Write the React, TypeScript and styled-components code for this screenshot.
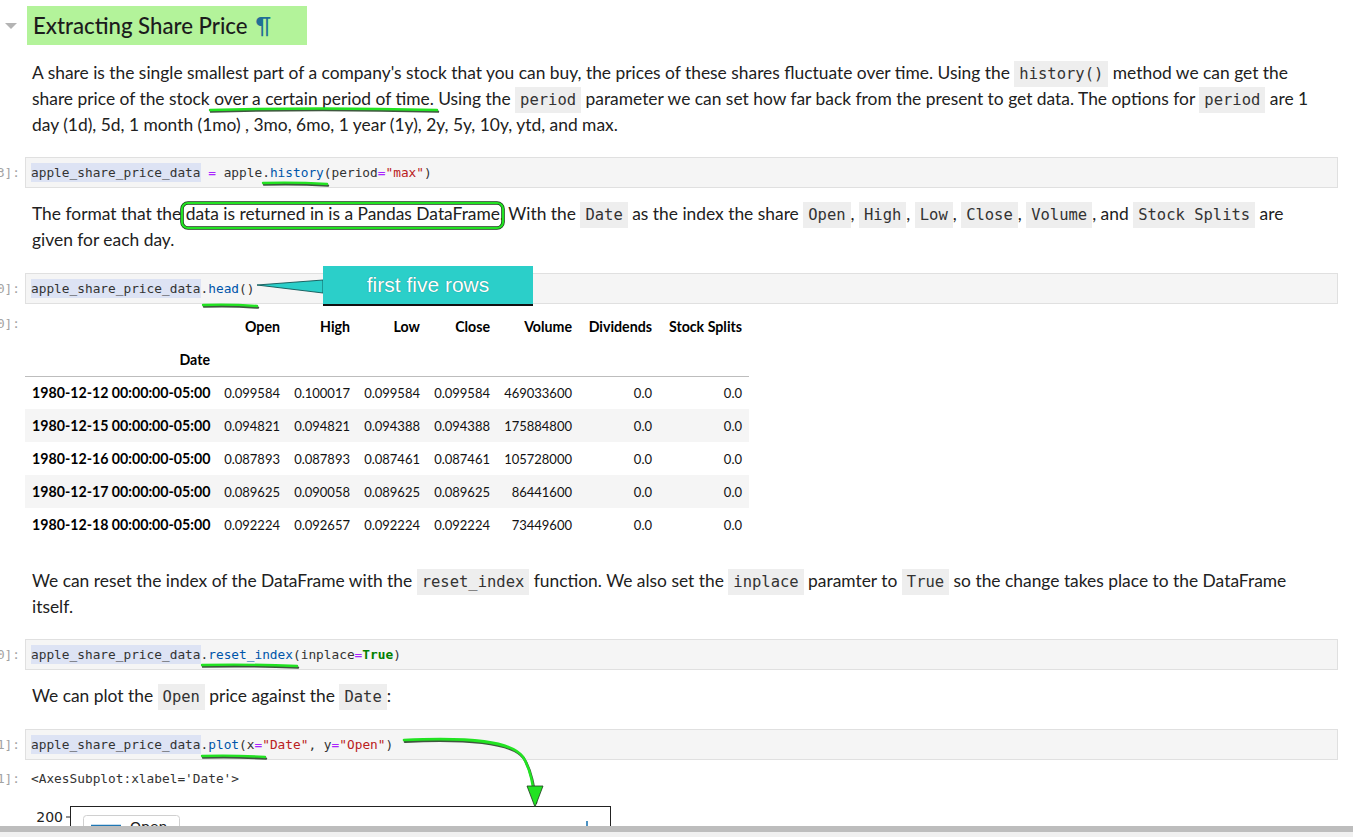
import React from "react";
import styled, { createGlobalStyle } from "styled-components";

const GlobalStyle = createGlobalStyle`
  html, body { margin: 0; padding: 0; background: #ffffff; }
  body { font-family: Lato, "Noto Sans", sans-serif; color: #212121; overflow: hidden; }
`;

const Page = styled.div`
  width: 1353px;
  height: 837px;
  display: flex;
  flex-direction: column;
  overflow: hidden;
  background: #fff;
`;

const Viewport = styled.div`
  position: relative;
  height: 826px;
  flex: none;
  overflow: hidden;
`;

const Notebook = styled.div`
  display: flex;
  flex-direction: column;
  padding-top: 6px;
`;

const Row = styled.div<{ $gap?: number }>`
  display: grid;
  grid-template-columns: 25px 1313px;
  margin-top: ${(p) => p.$gap ?? 0}px;
`;

const Prompt = styled.div<{ $lh?: number }>`
  display: flex;
  justify-content: flex-end;
  align-items: flex-start;
  overflow: hidden;
  white-space: nowrap;
  padding-right: 5px;
  font-family: "DejaVu Sans Mono", monospace;
  font-size: 12.8px;
  line-height: ${(p) => p.$lh ?? 31}px;
  color: #a3a3a3;
`;

const ToggleCell = styled.div`
  display: flex;
  align-items: center;
  padding-left: 5px;
`;

const Caret = styled.div`
  width: 0;
  height: 0;
  border-left: 6px solid transparent;
  border-right: 6px solid transparent;
  border-top: 6px solid #b4b4b4;
`;

const Heading = styled.h2`
  margin: 0 0 0 2px;
  box-sizing: border-box;
  width: 280px;
  height: 39px;
  display: flex;
  align-items: center;
  padding: 0 6px;
  background: #b3f39a;
  font-family: Lato, "Noto Sans", sans-serif;
  font-size: 22.2px;
  font-weight: 500;
  color: #1c1c1c;
`;

const Anchor = styled.span`
  margin-left: 8px;
  color: #1f6f96;
  font-weight: 400;
`;

const Markdown = styled.div`
  padding: 0 22px 0 7px;
  font-size: 17.4px;
  line-height: 26px;
  color: #212121;
  p { margin: 0; }
`;

const InlineCode = styled.code`
  font-family: "DejaVu Sans Mono", monospace;
  font-size: 15.5px;
  line-height: 1;
  background: #eeeeee;
  padding: 4px 5px;
  color: #333;
`;

const CodeCell = styled.div`
  box-sizing: border-box;
  height: 31px;
  border: 1px solid #e0e0e0;
  background: #f5f5f5;
  padding: 0 5px;
  font-family: "DejaVu Sans Mono", monospace;
  font-size: 12.8px;
  line-height: 29px;
  color: #333;
  white-space: pre;
`;

const Var = styled.span`
  background: #dde3f4;
  padding: 2px 0;
`;
const Op = styled.span`color: #aa22ff;`;
const Prop = styled.span`color: #0055aa;`;
const Str = styled.span`color: #ba2121;`;
const Kw = styled.span`color: #008000; font-weight: 700;`;

const Table = styled.table`
  border-collapse: collapse;
  table-layout: fixed;
  width: 724px;
  font-family: Lato, "Noto Sans", sans-serif;
  color: #111;

  th, td {
    height: 33px;
    padding: 0 7px;
    text-align: right;
    vertical-align: middle;
    white-space: nowrap;
    box-sizing: border-box;
  }
  th { font-weight: 700; font-size: 14.2px; color: #000; }
  td { font-weight: 400; font-size: 13px; }
  thead tr:last-child th { border-bottom: 1px solid #bdbdbd; }
  tbody tr:nth-child(even) { background: #f5f5f5; }
`;

const OutputText = styled.div`
  padding-left: 6px;
  font-family: "DejaVu Sans Mono", monospace;
  font-size: 12.8px;
  line-height: 18px;
  color: #333;
`;

const PlotBox = styled.div`
  height: 60px;
`;

const Overlay = styled.svg`
  position: absolute;
  left: 0;
  top: 0;
  width: 1353px;
  height: 826px;
  pointer-events: none;
`;

const Callout = styled.div`
  position: absolute;
  left: 323px;
  top: 266px;
  width: 210px;
  height: 40px;
  box-sizing: border-box;
  background: #2bcfc9;
  border-bottom: 2px solid #111;
  display: flex;
  align-items: center;
  justify-content: center;
  font-family: "Liberation Sans", Arial, sans-serif;
  font-size: 21px;
  color: #ffffff;
  text-shadow: 0 0 1px rgba(0, 60, 60, 0.6);
`;

const Scrollbar = styled.div`
  flex: 1;
  display: flex;
  flex-direction: column;
  background: #f0f0f0;
`;

const Thumb = styled.div`
  height: 6px;
  background: #bdbdbd;
`;

const cols = [192, 70, 70, 70, 70, 82, 80, 90];
const rows = [
  ["1980-12-12 00:00:00-05:00", "0.099584", "0.100017", "0.099584", "0.099584", "469033600", "0.0", "0.0"],
  ["1980-12-15 00:00:00-05:00", "0.094821", "0.094821", "0.094388", "0.094388", "175884800", "0.0", "0.0"],
  ["1980-12-16 00:00:00-05:00", "0.087893", "0.087893", "0.087461", "0.087461", "105728000", "0.0", "0.0"],
  ["1980-12-17 00:00:00-05:00", "0.089625", "0.090058", "0.089625", "0.089625", "86441600", "0.0", "0.0"],
  ["1980-12-18 00:00:00-05:00", "0.092224", "0.092657", "0.092224", "0.092224", "73449600", "0.0", "0.0"],
];

const Underline: React.FC<{ d: string }> = ({ d }) => (
  <g fill="none" strokeLinecap="round">
    <path d={d} stroke="#1d3a1d" strokeWidth={2.4} opacity={0.85} transform="translate(1 1.6)" />
    <path d={d} stroke="#22e322" strokeWidth={2.4} />
  </g>
);

const Annotations: React.FC = () => (
  <Overlay viewBox="0 0 1353 826">
    <Underline d="M 210 110 Q 320 107 437 110" />
    <Underline d="M 263 183 Q 295 182 327 184" />
    <g fill="none">
      <rect x={182} y={203} width={321} height={25} rx={6} stroke="#1d3a1d" strokeWidth={3.6} />
      <rect x={182} y={203} width={321} height={25} rx={6} stroke="#22e322" strokeWidth={2.2} />
    </g>
    <Underline d="M 203 305 Q 230 304 257 306" />
    <polygon points="257,285 323,280 323,293" fill="#2bcfc9" stroke="#0f5656" strokeWidth={0.9} />
    <Underline d="M 202 665 Q 250 664 297 666" />
    <Underline d="M 202 756 Q 233 755 265 757" />
    <g fill="none" strokeLinecap="round" strokeLinejoin="round">
      <path d="M 404 740 C 470 737 512 741 523 757 C 531 770 533 786 535 801" stroke="#1d3a1d" strokeWidth={2.6} opacity={0.85} transform="translate(1 1.6)" />
      <path d="M 404 740 C 470 737 512 741 523 757 C 531 770 533 786 535 801" stroke="#22e322" strokeWidth={2.6} />
    </g>
    <polygon points="527,786 543,786 535,807" fill="#22e322" stroke="#1d3a1d" strokeWidth={0.8} />
  </Overlay>
);

const Plot: React.FC = () => (
  <svg width="620" height="60" viewBox="0 0 620 60">
    <text x="38" y="26" textAnchor="end" fontFamily="DejaVu Sans, sans-serif" fontSize="14" fill="#222">200</text>
    <line x1="41" y1="21" x2="45" y2="21" stroke="#222" strokeWidth="1" />
    <rect x="45.5" y="10.5" width="540" height="60" fill="none" stroke="#222" strokeWidth="1" />
    <rect x="58.5" y="19.5" width="96" height="40" rx="3" fill="#fff" stroke="#d0d0d0" strokeWidth="1" />
    <line x1="66" y1="29.5" x2="96" y2="29.5" stroke="#1f77b4" strokeWidth="1.5" />
    <text x="105" y="36" fontFamily="DejaVu Sans, sans-serif" fontSize="14" fill="#222">Open</text>
    <line x1="562" y1="25" x2="562" y2="40" stroke="#1f77b4" strokeWidth="1.6" />
  </svg>
);

export default function App() {
  return (
    <Page>
      <GlobalStyle />
      <Viewport>
        <Notebook>
          <Row>
            <ToggleCell>
              <Caret />
            </ToggleCell>
            <Heading>
              Extracting Share Price<Anchor>¶</Anchor>
            </Heading>
          </Row>

          <Row $gap={15}>
            <div />
            <Markdown>
              <p>
                A share is the single smallest part of a company's stock that you can buy, the prices of these shares
                fluctuate over time. Using the <InlineCode>history()</InlineCode> method we can get the share price of
                the stock over a certain period of time. Using the <InlineCode>period</InlineCode> parameter we can set
                how far back from the present to get data. The options for <InlineCode>period</InlineCode> are 1 day
                (1d), 5d, 1 month (1mo) , 3mo, 6mo, 1 year (1y), 2y, 5y, 10y, ytd, and max.
              </p>
            </Markdown>
          </Row>

          <Row $gap={19}>
            <Prompt>In [3]:</Prompt>
            <CodeCell>
              <Var>apple_share_price_data</Var>{" "}<Op>=</Op>{" "}apple.<Prop>history</Prop>(period<Op>=</Op>
              <Str>"max"</Str>)
            </CodeCell>
          </Row>

          <Row $gap={13}>
            <div />
            <Markdown>
              <p>
                The format that the data is returned in is a Pandas DataFrame. With the <InlineCode>Date</InlineCode> as
                the index the share <InlineCode>Open</InlineCode>, <InlineCode>High</InlineCode>,{" "}
                <InlineCode>Low</InlineCode>, <InlineCode>Close</InlineCode>, <InlineCode>Volume</InlineCode>, and{" "}
                <InlineCode>Stock Splits</InlineCode> are given for each day.
              </p>
            </Markdown>
          </Row>

          <Row $gap={20}>
            <Prompt>In [10]:</Prompt>
            <CodeCell>
              <Var>apple_share_price_data</Var>.<Prop>head</Prop>()
            </CodeCell>
          </Row>

          <Row $gap={6}>
            <Prompt $lh={28}>Out[10]:</Prompt>
            <div>
              <Table>
                <colgroup>
                  {cols.map((w, i) => (
                    <col key={i} style={{ width: w }} />
                  ))}
                </colgroup>
                <thead>
                  <tr>
                    <th />
                    <th>Open</th>
                    <th>High</th>
                    <th>Low</th>
                    <th>Close</th>
                    <th>Volume</th>
                    <th>Dividends</th>
                    <th>Stock Splits</th>
                  </tr>
                  <tr>
                    <th>Date</th>
                    <th />
                    <th />
                    <th />
                    <th />
                    <th />
                    <th />
                    <th />
                  </tr>
                </thead>
                <tbody>
                  {rows.map((r) => (
                    <tr key={r[0]}>
                      <th>{r[0]}</th>
                      {r.slice(1).map((v, i) => (
                        <td key={i}>{v}</td>
                      ))}
                    </tr>
                  ))}
                </tbody>
              </Table>
            </div>
          </Row>

          <Row $gap={27}>
            <div />
            <Markdown>
              <p>
                We can reset the index of the DataFrame with the <InlineCode>reset_index</InlineCode> function. We also
                set the <InlineCode>inplace</InlineCode> paramter to <InlineCode>True</InlineCode> so the change takes
                place to the DataFrame itself.
              </p>
            </Markdown>
          </Row>

          <Row $gap={19}>
            <Prompt>In [20]:</Prompt>
            <CodeCell>
              <Var>apple_share_price_data</Var>.<Prop>reset_index</Prop>(inplace<Op>=</Op>
              <Kw>True</Kw>)
            </CodeCell>
          </Row>

          <Row $gap={13}>
            <div />
            <Markdown>
              <p>
                We can plot the <InlineCode>Open</InlineCode> price against the <InlineCode>Date</InlineCode>:
              </p>
            </Markdown>
          </Row>

          <Row $gap={20}>
            <Prompt>In [21]:</Prompt>
            <CodeCell>
              <Var>apple_share_price_data</Var>.<Prop>plot</Prop>(x<Op>=</Op>
              <Str>"Date"</Str>, y<Op>=</Op>
              <Str>"Open"</Str>)
            </CodeCell>
          </Row>

          <Row $gap={10}>
            <Prompt $lh={18}>Out[21]:</Prompt>
            <OutputText>&lt;AxesSubplot:xlabel='Date'&gt;</OutputText>
          </Row>

          <Row $gap={8}>
            <div />
            <PlotBox>
              <Plot />
            </PlotBox>
          </Row>
        </Notebook>
        <Annotations />
        <Callout>first five rows</Callout>
      </Viewport>
      <Scrollbar>
        <Thumb />
      </Scrollbar>
    </Page>
  );
}
